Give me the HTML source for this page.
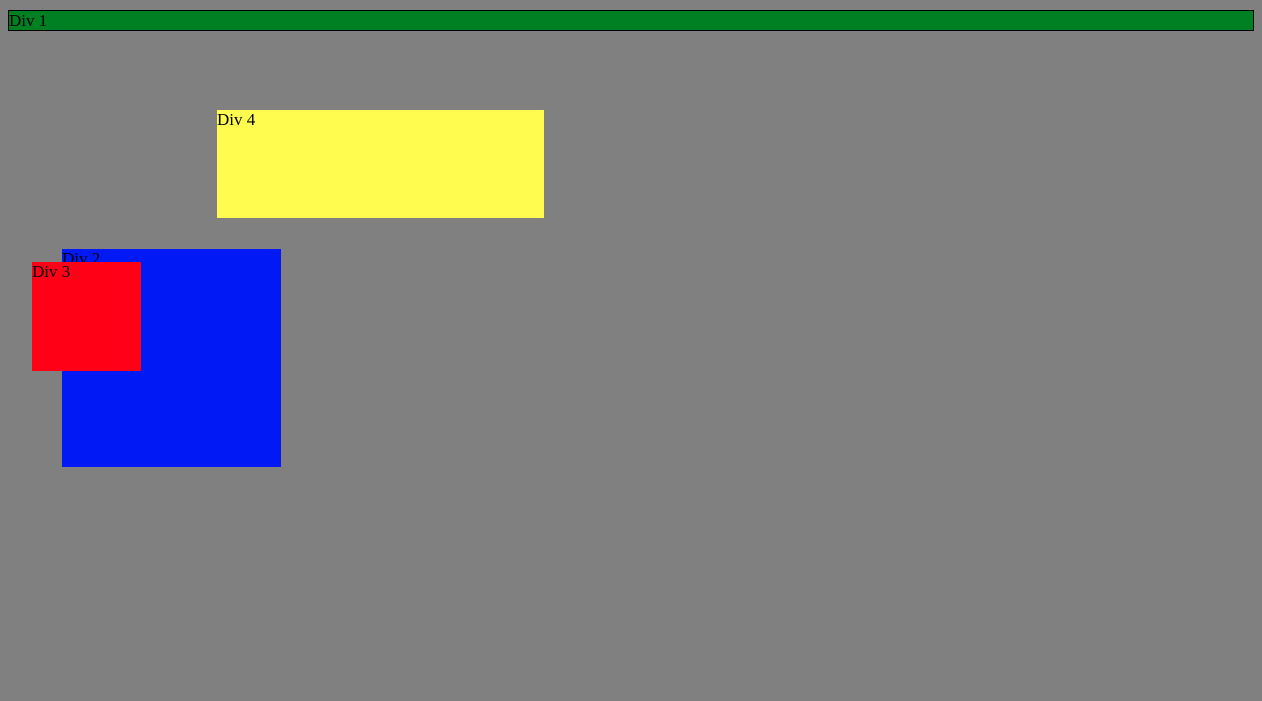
<!DOCTYPE html>
<html><head><style>
html,body{margin:0;padding:0;width:1262px;height:701px;background:#808080;overflow:hidden;font-family:"Liberation Serif",serif;font-size:17px;color:#000;}
div{position:absolute;line-height:19px;}
#d1{left:8px;top:10px;width:1244px;height:19px;background:#008023;border:1px solid #000;}
#d4{left:217px;top:110px;width:327px;height:108px;background:#fffb4f;}
#d2{left:62px;top:249px;width:219px;height:218px;background:#0019f5;}
#d3{left:32px;top:262px;width:109px;height:109px;background:#ff0016;}
</style></head><body>
<div id="d1">Div 1</div>
<div id="d4">Div 4</div>
<div id="d2">Div 2</div>
<div id="d3">Div 3</div>
</body></html>
